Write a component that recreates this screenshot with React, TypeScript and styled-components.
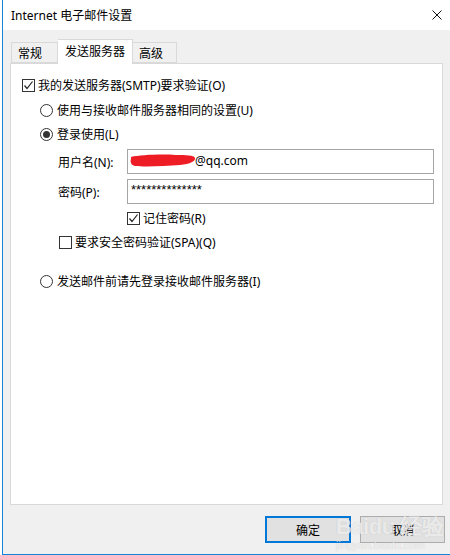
import React from "react";
import styled, { createGlobalStyle } from "styled-components";

const GlobalStyle = createGlobalStyle`
    html, body {
        margin: 0;
        padding: 0;
        background: #ffffff;
    }
    body {
        font-family: "Noto Sans", "Noto Sans CJK SC", sans-serif;
        font-size: 12px;
        color: #000;
    }
`;

const Window = styled.div`
    position: relative;
    margin-left: 2px;
    width: 447px;
    height: 554px;
    display: flex;
    flex-direction: column;
    border-left: 1px solid #1883d7;
    border-bottom: 1px solid #1883d7;
    background: #f0f0f0;
`;

const TitleBar = styled.div`
    height: 30px;
    background: #ffffff;
    display: flex;
    align-items: center;
    justify-content: space-between;
    padding: 0 8px 0 8px;
`;

const Title = styled.span`
    font-size: 12px;
    color: #000;
    margin-top: -1px;
`;

const CloseBtn = styled.div`
    width: 10px;
    height: 10px;
    margin-top: -1px;
    display: flex;
`;

const Body = styled.div`
    flex: 1;
    display: flex;
    flex-direction: column;
    padding: 9px 6px 0 7px;
`;

const TabBar = styled.div`
    display: flex;
    align-items: flex-end;
    height: 24px;
    padding-left: 1px;
    position: relative;
    z-index: 1;
`;

const Tab = styled.div<{ $w: number; $active?: boolean }>`
    box-sizing: border-box;
    width: ${(p) => p.$w}px;
    height: ${(p) => (p.$active ? 25 : 21)}px;
    margin-bottom: ${(p) => (p.$active ? -1 : 0)}px;
    border: 1px solid #d9d9d9;
    border-bottom: ${(p) => (p.$active ? "none" : "1px solid #d9d9d9")};
    background: ${(p) => (p.$active ? "#ffffff" : "#f0f0f0")};
    display: flex;
    align-items: center;
    padding-left: ${(p) => (p.$active ? 7 : 6)}px;
    padding-bottom: ${(p) => (p.$active ? 3 : 0)}px;
    & + & {
        border-left: none;
    }
`;

const Panel = styled.div`
    box-sizing: border-box;
    width: 433px;
    height: 442px;
    border: 1px solid #d9d9d9;
    background: #ffffff;
    display: flex;
    flex-direction: column;
`;

const Row = styled.div<{ $indent: number; $top: number; $h?: number }>`
    display: flex;
    align-items: center;
    height: ${(p) => p.$h ?? 20}px;
    margin-top: ${(p) => p.$top}px;
    padding-left: ${(p) => p.$indent}px;
`;

const Box = styled.span`
    box-sizing: border-box;
    width: 13px;
    height: 13px;
    border: 1px solid #333333;
    background: #fff;
    display: inline-flex;
    align-items: center;
    justify-content: center;
    margin-right: 3px;
    flex-shrink: 0;
`;

const Radio = styled.span<{ $on?: boolean }>`
    box-sizing: border-box;
    width: 13px;
    height: 13px;
    border-radius: 50%;
    border: 1px solid #333333;
    background: #fff;
    display: inline-flex;
    align-items: center;
    justify-content: center;
    margin-right: 4px;
    flex-shrink: 0;
    &::after {
        content: "";
        display: ${(p) => (p.$on ? "block" : "none")};
        width: 7px;
        height: 7px;
        border-radius: 50%;
        background: #333333;
    }
`;

const Label = styled.span<{ $w: number }>`
    width: ${(p) => p.$w}px;
`;

const Field = styled.div`
    box-sizing: border-box;
    width: 307px;
    height: 25px;
    border: 1px solid #a5a5a5;
    background: #fff;
    display: flex;
    align-items: center;
    padding: 0 0 2px 2px;
`;

const Stars = styled.span`
    font-family: "Liberation Sans", sans-serif;
    font-size: 13px;
    letter-spacing: 0;
    margin-top: -2px;
    margin-left: 1px;
`;

const Footer = styled.div`
    display: flex;
    justify-content: flex-end;
    gap: 9px;
    padding: 11px 0 0 0;
    margin-right: -1px;
`;

const Button = styled.div<{ $default?: boolean }>`
    box-sizing: border-box;
    width: ${(p) => (p.$default ? 86 : 85)}px;
    height: 27px;
    background: #e1e1e1;
    border: ${(p) => (p.$default ? "2px solid #0078d7" : "1px solid #adadad")};
    display: flex;
    align-items: center;
    justify-content: center;
`;

const Watermark = styled.div`
    position: absolute;
    left: 333px;
    top: 516px;
    pointer-events: none;
    color: rgba(255, 255, 255, 0.7);
    text-shadow: 0 0 1px rgba(140, 140, 140, 0.45);
    font-family: "Liberation Sans", sans-serif;
    line-height: 1;
`;

const WmBig = styled.div`
    font-size: 22px;
    font-weight: bold;
    letter-spacing: -0.5px;
`;

const WmSmall = styled.div`
    font-size: 11px;
    margin-top: 2px;
`;

const Check = () => (
    <svg width="11" height="11" viewBox="0 0 11 11">
        <polyline points="1.5,5.5 4,8.5 9.5,1.5" fill="none" stroke="#222" strokeWidth="1.2" />
    </svg>
);

const Scribble = () => (
    <svg width="66" height="15" viewBox="0 0 66 15" style={{ marginRight: -1 }}>
        <path
            d="M1 4 C 10 2, 30 1, 46 2 C 56 2, 64 2, 65 5 C 66 8, 60 11, 50 12 C 36 13, 16 14, 5 13 C 1 12, 0 9, 1 6 Z"
            fill="#ee1c25"
        />
    </svg>
);

export default function App() {
    return (
        <>
            <GlobalStyle />
            <Window>
                <TitleBar>
                    <Title>Internet 电子邮件设置</Title>
                    <CloseBtn>
                        <svg width="10" height="10" viewBox="0 0 10 10">
                            <path d="M0.5 0.5 L9.5 9.5 M9.5 0.5 L0.5 9.5" stroke="#111" strokeWidth="1" />
                        </svg>
                    </CloseBtn>
                </TitleBar>
                <Body>
                    <TabBar>
                        <Tab $w={47}>常规</Tab>
                        <Tab $w={75} $active>发送服务器</Tab>
                        <Tab $w={44}>高级</Tab>
                    </TabBar>
                    <Panel>
                        <Row $indent={11} $top={11}>
                            <Box><Check /></Box>
                            我的发送服务器(SMTP)要求验证(O)
                        </Row>
                        <Row $indent={29} $top={5}>
                            <Radio />
                            使用与接收邮件服务器相同的设置(U)
                        </Row>
                        <Row $indent={29} $top={4}>
                            <Radio $on />
                            登录使用(L)
                        </Row>
                        <Row $indent={47} $top={5} $h={25}>
                            <Label $w={69}>用户名(N):</Label>
                            <Field>
                                <Scribble />
                                @qq.com
                            </Field>
                        </Row>
                        <Row $indent={47} $top={5} $h={25}>
                            <Label $w={69}>密码(P):</Label>
                            <Field>
                                <Stars>**************</Stars>
                            </Field>
                        </Row>
                        <Row $indent={116} $top={4}>
                            <Box><Check /></Box>
                            记住密码(R)
                        </Row>
                        <Row $indent={48} $top={4}>
                            <Box />
                            要求安全密码验证(SPA)(Q)
                        </Row>
                        <Row $indent={29} $top={19}>
                            <Radio />
                            发送邮件前请先登录接收邮件服务器(I)
                        </Row>
                    </Panel>
                    <Footer>
                        <Button $default>确定</Button>
                        <Button>取消</Button>
                    </Footer>
                </Body>
                <Watermark>
                    <WmBig>Baidu 经验</WmBig>
                    <WmSmall>jingyan.baidu.com</WmSmall>
                </Watermark>
            </Window>
        </>
    );
}
